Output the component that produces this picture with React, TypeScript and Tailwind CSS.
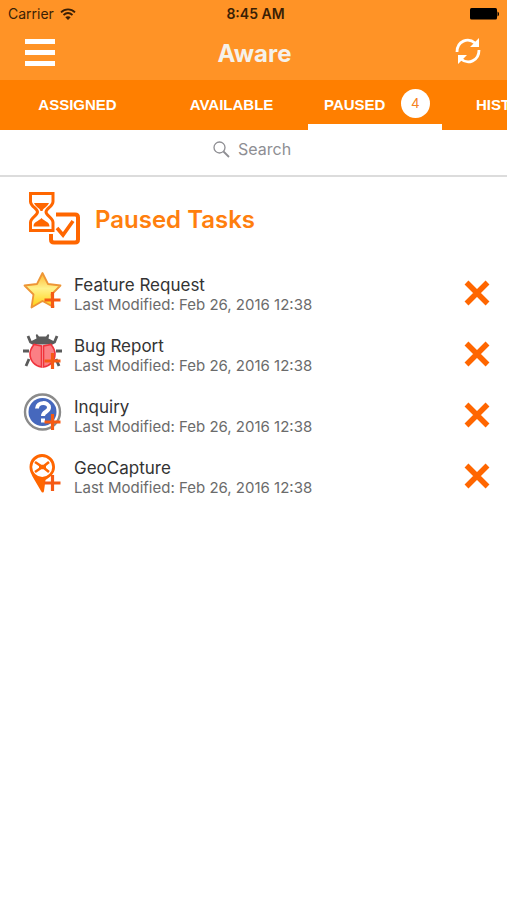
import type { ReactNode } from "react";

const ORANGE = "#ff6600";

function Plus() {
  return (
    <path
      d="M29.500 21v16M21.500 29h16"
      stroke="#f55a14"
      strokeWidth="3.200"
      fill="none"
    />
  );
}

function StarIcon() {
  return (
    <svg viewBox="0 0 40 40" className="h-10 w-10 shrink-0" aria-hidden="true">
      <defs>
        <linearGradient id="star" x1="0" y1="0" x2="0" y2="1">
          <stop offset="0" stopColor="#ffb52e" />
          <stop offset="0.45" stopColor="#fff28c" />
          <stop offset="1" stopColor="#ffcf10" />
        </linearGradient>
      </defs>
      <path
        d="M19.500 2l5.500 11 12.500 1.500-9 9 2 12.500-11-6-11 6.500 2-13-9-9 12.500-1.500z"
        fill="url(#star)"
        stroke="#ee9636"
        strokeWidth="1.800"
        strokeLinejoin="round"
      />
      <Plus />
    </svg>
  );
}

function BugIcon() {
  return (
    <svg viewBox="0 0 40 40" className="h-10 w-10 shrink-0" aria-hidden="true">
      <g stroke="#5b5b5b" strokeWidth="2.800" fill="none">
        <path d="M5 4l2.500 6 4 2M34 4l-2.500 6-4 2M0 19h6M33 19h6M3 34l3-7M36 34l-3-7" />
      </g>
      <path
        d="M14 2l2 2.500h7L25 2l1.200 1-.7 3.500 6 3c-3 3-6 3-12 3s-9 0-12-3l6-3-.7-3.500z"
        fill="#5b5b5b"
      />
      <path
        d="M18.500 14v21C12 34 7 29 7 22c0-4 2-7 4-9.500zM20.500 14v21C27 34 32 29 32 22c0-4-2-7-4-9.500z"
        fill="#fb7f84"
        stroke="#f0333c"
        strokeWidth="1.600"
      />
      <Plus />
    </svg>
  );
}

function InquiryIcon() {
  return (
    <svg viewBox="0 0 40 40" className="h-10 w-10 shrink-0" aria-hidden="true">
      <circle cx="19.500" cy="19" r="17.500" fill="#fff" stroke="#8b8b8b" strokeWidth="2.400" />
      <circle cx="19.500" cy="19" r="14" fill="#4668bd" />
      <path
        d="M14 15.500c0-7 12-7 12-1 0 4.500-6 4-6 8.500M20 25.500v4"
        stroke="#fff"
        strokeWidth="4"
        fill="none"
      />
      <Plus />
    </svg>
  );
}

function GeoIcon() {
  return (
    <svg viewBox="0 0 40 40" className="h-10 w-10 shrink-0" aria-hidden="true">
      <path
        fillRule="evenodd"
        d="M19 0C12 0 6.500 5.500 6.500 13c0 4 1.500 6 3 9.500L18 37c1 2 2.500 2 3 0l1.500-11c5-3 9.500-7 9.500-13C32 5.500 26 0 19 0zM19.200 3a10 10 0 1 1 0 20 10 10 0 0 1 0-20z"
        fill={ORANGE}
      />
      <path d="M12 8l6 4h3l5-4M12 18l6-4h3l5 4" fill="none" stroke={ORANGE} strokeWidth="2.600" />
      <path d="M16 11h7v4h-7z" fill={ORANGE} />
      <Plus />
    </svg>
  );
}

function PausedIcon() {
  return (
    <svg viewBox="0 0 54 54" className="h-[54px] w-[54px] shrink-0" aria-hidden="true">
      <path
        d="M3.500 2.500h22.500v8c0 5-7 7-7 10.500s7 5.500 7 10.500v8H3.500v-8c0-5 7-7 7-10.500s-7-5.500-7-10.500z"
        fill="none"
        stroke={ORANGE}
        strokeWidth="3"
      />
      <path
        d="M7 12h15c-1.500 4-6 5-6.500 8h-2C13 17 8.500 16 7 12zM6.500 35.500c0-5 5-5 8-8.500 3 3.500 8 3.500 8 8.500z"
        fill={ORANGE}
      />
      <path
        d="M29 23.500h19q3 0 3 3v22q0 3-3 3H27q-3 0-3-3V43"
        fill="none"
        stroke={ORANGE}
        strokeWidth="4"
      />
      <path d="M30 37l6 7 10-14" fill="none" stroke={ORANGE} strokeWidth="3.600" />
    </svg>
  );
}

interface Task {
  name: string;
  modified: string;
  icon: ReactNode;
}

const TASKS: Task[] = [
  { name: "Feature Request", modified: "Feb 26, 2016 12:38", icon: <StarIcon /> },
  { name: "Bug Report", modified: "Feb 26, 2016 12:38", icon: <BugIcon /> },
  { name: "Inquiry", modified: "Feb 26, 2016 12:38", icon: <InquiryIcon /> },
  { name: "GeoCapture", modified: "Feb 26, 2016 12:38", icon: <GeoIcon /> },
];

function StatusBar() {
  return (
    <div className="flex h-7 items-center pr-2 pl-2 text-sm text-[#3a1f05]">
      <div className="flex flex-1 items-center gap-1.5">
        <span>Carrier</span>
        <svg viewBox="0 0 16 12" className="h-3 w-4" aria-hidden="true">
          <path
            d="M1 4.300c4-4 10-4 14 0M3.500 7c3-2.600 6-2.600 9 0"
            fill="none"
            stroke="currentColor"
            strokeWidth="1.800"
          />
          <path d="M8 12L5.300 9.200c1.500-1.300 3.900-1.300 5.400 0z" fill="currentColor" />
        </svg>
      </div>
      <span className="pl-1 font-semibold">8:45 AM</span>
      <div className="flex flex-1 justify-end">
        <svg viewBox="0 0 30 12" className="h-3 w-[30px]" aria-hidden="true">
          <rect x="1" width="27" height="11.500" rx="1.500" fill="#000" />
          <path d="M28.500 3.500c2 1 2 4 0 5z" fill="#000" />
        </svg>
      </div>
    </div>
  );
}

export default function App() {
  return (
    <div className="min-h-screen overflow-hidden bg-white font-['Inter','Liberation_Sans',sans-serif]">
      <header className="bg-[#ff9326]">
        <StatusBar />
        <div className="flex h-[52px] items-center justify-between px-6 pb-1">
          <button aria-label="Menu" className="flex w-8 flex-col gap-[6px] px-px">
            <span className="h-[5px] w-full bg-white" />
            <span className="h-[5px] w-full bg-white" />
            <span className="h-[5px] w-full bg-white" />
          </button>
          <h1 className="pt-1 text-2xl font-bold text-[#f5f1ea]">Aware</h1>
          <button aria-label="Refresh">
            <svg viewBox="0 0 30 30" className="h-[30px] w-[30px]" aria-hidden="true">
              <path
                d="M4 15C4 4 15 0 22 6M26 13c0 11-11 15-18 9"
                fill="none"
                stroke="#fff"
                strokeWidth="2.800"
              />
              <path d="M26 1v9h-9zM5 27v-9h9z" fill="#fff" />
            </svg>
          </button>
        </div>
      </header>

      <nav className="flex h-[50px] bg-[#ff7f00] font-['Liberation_Sans',sans-serif] text-[15px] font-bold text-white">
        <button className="w-[155px] shrink-0">ASSIGNED</button>
        <button className="w-[153px] shrink-0">AVAILABLE</button>
        <button
          aria-current="page"
          className="flex w-[134px] shrink-0 items-center justify-between border-b-[6px] border-white pt-1.5 pr-3 pl-4"
        >
          PAUSED
          <span className="mb-1 flex h-[29px] w-[29px] items-center justify-center rounded-full bg-white text-sm font-normal text-[#f58220]">
            4
          </span>
        </button>
        <button className="shrink-0 px-[34px]">HISTORY</button>
      </nav>

      <div className="flex h-[47px] justify-center border-b-2 border-[#dcdcdc] pt-[7px]">
        <label className="flex h-6 items-center gap-2 text-[#8e8e93]">
          <svg viewBox="0 0 17 17" className="h-[17px] w-[17px]" aria-hidden="true">
            <circle cx="6.500" cy="6.500" r="5.500" fill="none" stroke="currentColor" strokeWidth="1.300" />
            <path d="M10.500 10.500l5.500 5.500" stroke="currentColor" strokeWidth="1.800" />
          </svg>
          <input
            type="text"
            aria-label="Search"
            placeholder="Search"
            className="w-14 text-base outline-none placeholder:text-[#8e8e93]"
          />
        </label>
      </div>

      <main>
        <div className="flex h-[86px] items-center gap-3.5 pl-[27px]">
          <div className="pb-1">
            <PausedIcon />
          </div>
          <h2 className="text-2xl font-semibold text-[#ff7f0e]">Paused Tasks</h2>
        </div>
        <ul>
          {TASKS.map((task) => (
            <li key={task.name} className="flex h-[61px] items-center pr-[17px] pb-0.5 pl-[23px]">
              <span className="pb-1">{task.icon}</span>
              <div className="min-w-0 flex-1 pt-1 pl-[11px]">
                <div className="text-[17px] leading-5 text-[#333]">{task.name}</div>
                <div className="text-[15px] leading-5 text-[#6b6b6b]">
                  Last Modified: {task.modified}
                </div>
              </div>
              <button aria-label={`Remove ${task.name}`}>
                <svg viewBox="0 0 26 26" className="h-[26px] w-[26px]" aria-hidden="true">
                  <path d="M2.500 2.500l21 21M23.500 2.500l-21 21" stroke={ORANGE} strokeWidth="5.500" />
                </svg>
              </button>
            </li>
          ))}
        </ul>
      </main>
    </div>
  );
}
